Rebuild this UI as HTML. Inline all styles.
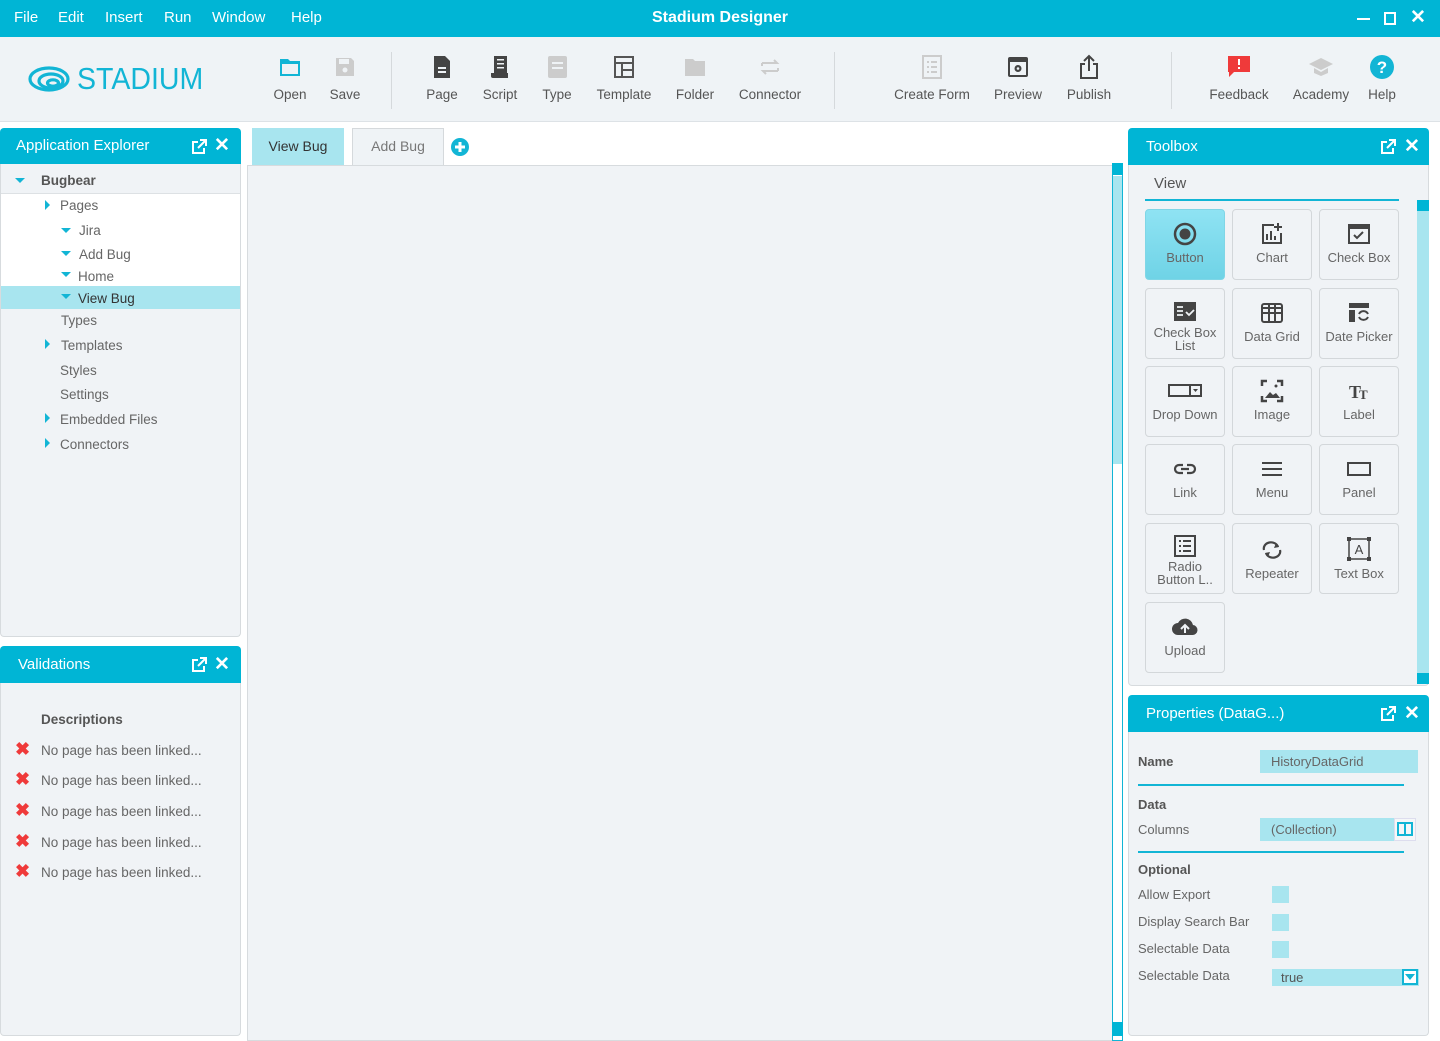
<!DOCTYPE html>
<html><head><meta charset="utf-8"><style>
*{box-sizing:border-box;margin:0;padding:0}
body{width:1440px;height:1041px;overflow:hidden;background:#fff;font-family:"Liberation Sans",sans-serif;color:#555;position:relative}
.abs{position:absolute}
.title{left:0;top:0;width:1440px;height:37px;background:#00b5d5;color:#fff}
.menu span{position:absolute;top:9px;font-size:15px}
.tb{left:0;top:37px;width:1440px;height:85px;background:#eff3f6;border-bottom:1px solid #dde2e6}
.tbi{position:absolute;top:0;text-align:center;font-size:13.5px;color:#555}
.tbi .ic{height:28px;margin-top:16px;display:flex;align-items:center;justify-content:center}
.tbi .lb{margin-top:6px}
.sep{position:absolute;top:15px;width:1px;height:57px;background:#d5d9dc}
.hdr{background:#00b5d5;color:#fff;font-size:15px;border-radius:4px 4px 0 0;padding-left:16px;line-height:36px}
.body{background:#f0f3f6;border:1px solid #d7dbde;border-top:none;border-radius:0 0 4px 4px}
.tree div{position:absolute;font-size:13.5px;color:#666}
.tri{position:absolute;width:0;height:0}
.td{border-left:5px solid transparent;border-right:5px solid transparent;border-top:5px solid #12b5d5}
.tr{border-top:5px solid transparent;border-bottom:5px solid transparent;border-left:5px solid #12b5d5}
.val div{position:absolute;font-size:13.5px;color:#666}
.tile{position:absolute;width:80px;height:71px;border:1px solid #d3d7da;border-radius:4px;text-align:center;font-size:13px;color:#666;line-height:13px}
.tile svg{display:block;margin:12px auto 5px}
.prop div{position:absolute;font-size:13px;color:#666}
</style></head><body>
<div class="abs title">
 <div class="menu"><span style="left:14px">File</span><span style="left:58px">Edit</span><span style="left:105px">Insert</span><span style="left:164px">Run</span><span style="left:212px">Window</span><span style="left:291px">Help</span></div>
 <div class="abs" style="left:0;width:1440px;top:9px;text-align:center;font-weight:bold;font-size:16px">Stadium Designer</div>
 <div class="abs" style="left:1357px;top:18px;width:13px;height:2px;background:#fff"></div>
 <div class="abs" style="left:1384px;top:12px;width:12px;height:13px;border:2px solid #fff"></div>
 <div class="abs" style="left:1410px;top:6px;font-size:19px;font-weight:bold">✕</div>
</div>
<div class="abs tb">
 <svg class="abs" style="left:28px;top:28px" width="44" height="28" viewBox="0 0 44 28"><g fill="none" stroke="#12b5d5" stroke-width="3.2"><ellipse cx="21" cy="14" rx="19" ry="11"/><ellipse cx="23" cy="16" rx="12" ry="7"/><ellipse cx="25" cy="18" rx="5.5" ry="3.2"/></g></svg>
 <div class="abs" style="left:77px;top:24px;font-size:31px;color:#12b5d5;transform:scaleX(0.92);transform-origin:left">STADIUM</div>
 <div class="tbi" style="left:268px;width:44px"><div class="ic"><svg width="22" height="22" viewBox="0 0 22 22"><path d="M1 3h8l2 2h10v15H1z" fill="#12b5d5"/><rect x="3" y="8" width="16" height="10" fill="#eff3f6"/></svg></div><div class="lb">Open</div></div>
 <div class="tbi" style="left:325px;width:40px"><div class="ic"><svg width="22" height="22" viewBox="0 0 22 22"><path d="M2 2h15l3 3v15H2z" fill="#ccc"/><rect x="5" y="3" width="10" height="5" fill="#eff3f6"/><circle cx="11" cy="14" r="2.5" fill="#eff3f6"/></svg></div><div class="lb">Save</div></div>
 <div class="sep" style="left:391px"></div>
 <div class="tbi" style="left:422px;width:40px"><div class="ic"><svg width="22" height="24" viewBox="0 0 22 24"><path d="M3 1h11l5 5v17H3z" fill="#444"/><rect x="7" y="12" width="8" height="2" fill="#eff3f6"/><rect x="7" y="16" width="8" height="2" fill="#eff3f6"/></svg></div><div class="lb">Page</div></div>
 <div class="tbi" style="left:478px;width:44px"><div class="ic"><svg width="22" height="24" viewBox="0 0 22 24"><rect x="5" y="1" width="13" height="18" fill="#444"/><rect x="8" y="4" width="7" height="1.5" fill="#eff3f6"/><rect x="8" y="8" width="7" height="1.5" fill="#eff3f6"/><rect x="8" y="12" width="7" height="1.5" fill="#eff3f6"/><path d="M2 18h17v5H4a2 2 0 0 1-2-2z" fill="#444"/></svg></div><div class="lb">Script</div></div>
 <div class="tbi" style="left:537px;width:40px"><div class="ic"><svg width="22" height="24" viewBox="0 0 22 24"><rect x="2" y="1" width="19" height="22" rx="2" fill="#ccc"/><rect x="6" y="7" width="11" height="2" fill="#eff3f6"/><rect x="6" y="12" width="11" height="2" fill="#eff3f6"/></svg></div><div class="lb">Type</div></div>
 <div class="tbi" style="left:593px;width:62px"><div class="ic"><svg width="22" height="24" viewBox="0 0 22 24"><rect x="2" y="2" width="18" height="20" fill="none" stroke="#555" stroke-width="2"/><path d="M2 8h18M9 8v14M9 15h11" stroke="#555" stroke-width="2"/></svg></div><div class="lb">Template</div></div>
 <div class="tbi" style="left:673px;width:44px"><div class="ic"><svg width="22" height="22" viewBox="0 0 22 22"><path d="M1 3h8l2 2h10v15H1z" fill="#ccc"/></svg></div><div class="lb">Folder</div></div>
 <div class="tbi" style="left:736px;width:68px"><div class="ic"><svg width="22" height="24" viewBox="0 0 22 24"><path d="M3 8h15l-3-3M19 16H4l3 3M3 8v3M19 16v-3" fill="none" stroke="#ccc" stroke-width="2"/></svg></div><div class="lb">Connector</div></div>
 <div class="sep" style="left:834px"></div>
 <div class="tbi" style="left:892px;width:80px"><div class="ic"><svg width="22" height="24" viewBox="0 0 22 24"><rect x="2" y="1" width="18" height="22" fill="none" stroke="#ccc" stroke-width="2"/><path d="M6 7h2M10 7h6M6 12h2M10 12h6M6 17h2M10 17h6" stroke="#ccc" stroke-width="2"/></svg></div><div class="lb">Create Form</div></div>
 <div class="tbi" style="left:992px;width:52px"><div class="ic"><svg width="22" height="22" viewBox="0 0 22 22"><rect x="1" y="1" width="20" height="20" rx="2" fill="#444"/><rect x="3" y="6" width="16" height="13" fill="#eff3f6"/><circle cx="11" cy="12.5" r="3.5" fill="#444"/><circle cx="11" cy="12.5" r="1.3" fill="#eff3f6"/></svg></div><div class="lb">Preview</div></div>
 <div class="tbi" style="left:1064px;width:50px"><div class="ic"><svg width="22" height="26" viewBox="0 0 22 26"><path d="M7 10H3v14h16V10h-4M11 17V2M6 7l5-5 5 5" fill="none" stroke="#444" stroke-width="2"/></svg></div><div class="lb">Publish</div></div>
 <div class="sep" style="left:1171px"></div>
 <div class="tbi" style="left:1206px;width:66px"><div class="ic"><svg width="24" height="24" viewBox="0 0 24 24"><path d="M1 1h22v16H7l-5 5v-5H1z" fill="#ef3a3a"/><rect x="11" y="4" width="2" height="6" fill="#fff"/><rect x="11" y="12" width="2" height="2" fill="#fff"/></svg></div><div class="lb">Feedback</div></div>
 <div class="tbi" style="left:1290px;width:62px"><div class="ic"><svg width="26" height="22" viewBox="0 0 26 22"><path d="M13 2l12 6-12 6L1 8z" fill="#ccc"/><path d="M6 12v5l7 3 7-3v-5l-7 4z" fill="#ccc"/></svg></div><div class="lb">Academy</div></div>
 <div class="tbi" style="left:1362px;width:40px"><div class="ic"><svg width="24" height="24" viewBox="0 0 24 24"><circle cx="12" cy="12" r="12" fill="#12b5d5"/><text x="12" y="18" text-anchor="middle" font-family="Liberation Sans" font-weight="bold" font-size="17" fill="#fff">?</text></svg></div><div class="lb">Help</div></div>
</div>

<div class="abs hdr" style="left:0;top:128px;width:241px;height:36px">Application Explorer</div>
<svg class="abs" style="left:191px;top:139px" width="16" height="16" viewBox="0 0 16 16"><path d="M7 3H2v11h11V9M9 1h6v6M15 1L7 9" fill="none" stroke="#fff" stroke-width="2"/></svg>
<div class="abs" style="left:214px;top:134px;color:#fff;font-weight:bold;font-size:19px">✕</div>
<div class="abs body" style="left:0;top:164px;width:241px;height:473px"></div>
<div class="abs" style="left:1px;top:193px;width:239px;height:116px;background:#fff;border-top:1px solid #dde1e4"></div>
<div class="abs" style="left:1px;top:286px;width:239px;height:23px;background:#a8e5ef"></div>
<div class="tree">
 <div class="tri td" style="left:15px;top:178px"></div><div style="left:41px;top:173px;font-weight:bold;color:#555">Bugbear</div>
 <div class="tri tr" style="left:45px;top:200px"></div><div style="left:60px;top:198px">Pages</div>
 <div class="tri td" style="left:61px;top:228px"></div><div style="left:79px;top:223px">Jira</div>
 <div class="tri td" style="left:61px;top:251px"></div><div style="left:79px;top:247px">Add Bug</div>
 <div class="tri td" style="left:61px;top:272px"></div><div style="left:78px;top:269px">Home</div>
 <div class="tri td" style="left:61px;top:294px"></div><div style="left:78px;top:291px;color:#333">View Bug</div>
 <div style="left:61px;top:313px">Types</div>
 <div class="tri tr" style="left:45px;top:339px"></div><div style="left:61px;top:338px">Templates</div>
 <div style="left:60px;top:363px">Styles</div>
 <div style="left:60px;top:387px">Settings</div>
 <div class="tri tr" style="left:45px;top:413px"></div><div style="left:60px;top:412px">Embedded Files</div>
 <div class="tri tr" style="left:45px;top:438px"></div><div style="left:60px;top:437px">Connectors</div>
</div>

<div class="abs hdr" style="left:0;top:646px;width:241px;height:37px;padding-left:18px;line-height:38px">Validations</div>
<svg class="abs" style="left:191px;top:657px" width="16" height="16" viewBox="0 0 16 16"><path d="M7 3H2v11h11V9M9 1h6v6M15 1L7 9" fill="none" stroke="#fff" stroke-width="2"/></svg>
<div class="abs" style="left:214px;top:653px;color:#fff;font-weight:bold;font-size:19px">✕</div>
<div class="abs body" style="left:0;top:683px;width:241px;height:353px"></div>
<div class="val">
 <div style="left:41px;top:712px;font-weight:bold;color:#555">Descriptions</div>
 <div style="left:15px;top:739px;color:#ef3a3a;font-weight:bold;font-size:18px">✖</div><div style="left:41px;top:743px">No page has been linked...</div>
 <div style="left:15px;top:769px;color:#ef3a3a;font-weight:bold;font-size:18px">✖</div><div style="left:41px;top:773px">No page has been linked...</div>
 <div style="left:15px;top:800px;color:#ef3a3a;font-weight:bold;font-size:18px">✖</div><div style="left:41px;top:804px">No page has been linked...</div>
 <div style="left:15px;top:831px;color:#ef3a3a;font-weight:bold;font-size:18px">✖</div><div style="left:41px;top:835px">No page has been linked...</div>
 <div style="left:15px;top:861px;color:#ef3a3a;font-weight:bold;font-size:18px">✖</div><div style="left:41px;top:865px">No page has been linked...</div>
</div>

<div class="abs" style="left:252px;top:128px;width:92px;height:37px;background:#a8e5ef;text-align:center;line-height:36px;font-size:14px;color:#333">View Bug</div>
<div class="abs" style="left:352px;top:128px;width:92px;height:37px;background:#eff3f6;border:1px solid #d5d9dc;border-bottom:none;text-align:center;line-height:35px;font-size:14px;color:#777">Add Bug</div>
<svg class="abs" style="left:451px;top:138px" width="18" height="18" viewBox="0 0 18 18"><circle cx="9" cy="9" r="9" fill="#12b5d5"/><path d="M9 4v10M4 9h10" stroke="#fff" stroke-width="3"/></svg>
<div class="abs" style="left:247px;top:165px;width:866px;height:876px;background:#f0f3f6;border:1px solid #d7dbde"></div>
<div class="abs" style="left:1112px;top:163px;width:11px;height:878px;background:#fff;border:1px solid #12b5d5"></div>
<div class="abs" style="left:1112px;top:163px;width:11px;height:12px;background:#00b5d5"></div>
<div class="abs" style="left:1113px;top:176px;width:9px;height:288px;background:#a8e5ef"></div>
<div class="abs" style="left:1112px;top:1022px;width:11px;height:14px;background:#00b5d5"></div>

<div class="abs hdr" style="left:1128px;top:128px;width:301px;height:37px;padding-left:18px;line-height:38px">Toolbox</div>
<svg class="abs" style="left:1380px;top:139px" width="16" height="16" viewBox="0 0 16 16"><path d="M7 3H2v11h11V9M9 1h6v6M15 1L7 9" fill="none" stroke="#fff" stroke-width="2"/></svg>
<div class="abs" style="left:1404px;top:135px;color:#fff;font-weight:bold;font-size:19px">✕</div>
<div class="abs body" style="left:1128px;top:165px;width:301px;height:521px"></div>
<div class="abs" style="left:1154px;top:175px;font-size:15px;color:#555">View</div>
<div class="abs" style="left:1145px;top:199px;width:254px;height:2px;background:#12b5d5"></div>
<div class="abs" style="left:1417px;top:200px;width:12px;height:484px;background:#a8e5ef"></div>
<div class="abs" style="left:1417px;top:200px;width:12px;height:11px;background:#00b5d5"></div>
<div class="abs" style="left:1417px;top:673px;width:12px;height:11px;background:#00b5d5"></div>

<div class="tile" style="left:1145px;top:209px;background:linear-gradient(#8fe3f3,#6fd3e6);border-color:#7fd6e6"><svg width="24" height="24" viewBox="0 0 24 24"><circle cx="12" cy="12" r="10" fill="none" stroke="#444" stroke-width="2.5"/><circle cx="12" cy="12" r="5.5" fill="#444"/></svg>Button</div>
<div class="tile" style="left:1232px;top:209px"><svg width="24" height="24" viewBox="0 0 24 24"><path d="M14 3H3v18h18V11" fill="none" stroke="#444" stroke-width="2"/><path d="M7 12v6M11 9v9M15 14v4M18 1v8M14 5h8" stroke="#444" stroke-width="2"/></svg>Chart</div>
<div class="tile" style="left:1319px;top:209px"><svg width="24" height="24" viewBox="0 0 24 24"><rect x="2" y="3" width="20" height="18" fill="none" stroke="#444" stroke-width="2"/><rect x="2" y="3" width="20" height="4" fill="#444"/><path d="M7 13l3 3 6-6" fill="none" stroke="#444" stroke-width="2"/></svg>Check Box</div>
<div class="tile" style="left:1145px;top:288px"><svg width="24" height="22" viewBox="0 0 24 22" style="margin-bottom:3px"><rect x="1" y="1" width="22" height="19" fill="#444"/><path d="M4 6h6M4 10h6M4 14h6M13 11l3 3 5-5" fill="none" stroke="#f0f3f6" stroke-width="1.8"/></svg>Check Box<br>List</div>
<div class="tile" style="left:1232px;top:288px"><svg width="24" height="24" viewBox="0 0 24 24"><rect x="2" y="3" width="20" height="18" rx="2" fill="none" stroke="#444" stroke-width="2"/><path d="M2 12h20M9 3v18M15 3v18M2 7h20" stroke="#444" stroke-width="2"/></svg>Data Grid</div>
<div class="tile" style="left:1319px;top:288px"><svg width="24" height="24" viewBox="0 0 24 24"><rect x="2" y="2" width="20" height="5" fill="#444"/><rect x="2" y="9" width="6" height="12" fill="#444"/><path d="M12 13a5 5 0 0 1 9 0M21 16a5 5 0 0 1-9 0" fill="none" stroke="#444" stroke-width="2"/></svg>Date Picker</div>
<div class="tile" style="left:1145px;top:366px"><svg width="34" height="24" viewBox="0 0 34 24"><rect x="1" y="6" width="32" height="11" fill="none" stroke="#444" stroke-width="2"/><path d="M22 6v11" stroke="#444" stroke-width="2"/><path d="M25 10h5l-2.5 3z" fill="#444"/></svg>Drop Down</div>
<div class="tile" style="left:1232px;top:366px"><svg width="24" height="24" viewBox="0 0 24 24"><path d="M2 7V2h5M17 2h5v5M22 17v5h-5M7 22H2v-5" fill="none" stroke="#444" stroke-width="2.5"/><path d="M5 19l5-6 3 3 3-2 4 5z" fill="#444"/><circle cx="16" cy="7" r="1.5" fill="#444"/></svg>Image</div>
<div class="tile" style="left:1319px;top:366px"><svg width="24" height="24" viewBox="0 0 24 24"><text x="2" y="19" font-family="Liberation Serif" font-weight="bold" font-size="18" fill="#444">T</text><text x="12" y="20" font-family="Liberation Serif" font-weight="bold" font-size="13" fill="#444">T</text></svg>Label</div>
<div class="tile" style="left:1145px;top:444px"><svg width="24" height="24" viewBox="0 0 24 24"><path d="M10 8H6a4 4 0 0 0 0 8h4M14 8h4a4 4 0 0 1 0 8h-4M8 12h8" fill="none" stroke="#444" stroke-width="2.2"/></svg>Link</div>
<div class="tile" style="left:1232px;top:444px"><svg width="24" height="24" viewBox="0 0 24 24"><path d="M2 6h20M2 12h20M2 18h20" stroke="#444" stroke-width="2"/></svg>Menu</div>
<div class="tile" style="left:1319px;top:444px"><svg width="26" height="24" viewBox="0 0 26 24"><rect x="2" y="6" width="22" height="12" fill="none" stroke="#444" stroke-width="2"/></svg>Panel</div>
<div class="tile" style="left:1145px;top:523px"><svg width="24" height="24" viewBox="0 0 24 24" style="margin-top:10px;margin-bottom:2px"><rect x="2" y="2" width="20" height="20" fill="none" stroke="#444" stroke-width="2"/><path d="M6 7h2M10 7h8M6 12h2M10 12h8M6 17h2M10 17h8" stroke="#444" stroke-width="2"/></svg>Radio<br>Button L..</div>
<div class="tile" style="left:1232px;top:523px"><svg width="24" height="24" viewBox="0 0 24 24" style="margin-top:14px"><path d="M4 12a7 6 0 0 1 14-3M20 12a7 6 0 0 1-14 3" fill="none" stroke="#444" stroke-width="2.2"/><path d="M16 5l3 4-5 1zM8 19l-3-4 5-1z" fill="#444"/></svg>Repeater</div>
<div class="tile" style="left:1319px;top:523px"><svg width="26" height="26" viewBox="0 0 26 26"><rect x="3" y="3" width="20" height="20" fill="none" stroke="#444" stroke-width="1.5"/><rect x="1" y="1" width="4" height="4" fill="#444"/><rect x="21" y="1" width="4" height="4" fill="#444"/><rect x="1" y="21" width="4" height="4" fill="#444"/><rect x="21" y="21" width="4" height="4" fill="#444"/><text x="13" y="18" text-anchor="middle" font-family="Liberation Sans" font-size="13" fill="#444">A</text></svg>Text Box</div>
<div class="tile" style="left:1145px;top:602px"><svg width="28" height="24" viewBox="0 0 28 24"><path d="M7 20a6 6 0 0 1 0-12 8 8 0 0 1 15 2 5 5 0 0 1-1 10z" fill="#444"/><path d="M14 18v-7M10 14l4-4 4 4" fill="none" stroke="#f0f3f6" stroke-width="2"/></svg>Upload</div>

<div class="abs hdr" style="left:1128px;top:695px;width:301px;height:37px;padding-left:18px;line-height:37px">Properties (DataG...)</div>
<svg class="abs" style="left:1380px;top:706px" width="16" height="16" viewBox="0 0 16 16"><path d="M7 3H2v11h11V9M9 1h6v6M15 1L7 9" fill="none" stroke="#fff" stroke-width="2"/></svg>
<div class="abs" style="left:1404px;top:702px;color:#fff;font-weight:bold;font-size:19px">✕</div>
<div class="abs body" style="left:1128px;top:732px;width:301px;height:304px"></div>
<div class="prop">
 <div style="left:1138px;top:754px;font-weight:bold;color:#555">Name</div>
 <div style="left:1260px;top:750px;width:158px;height:23px;background:#a8e5ef;padding:4px 0 0 11px;color:#666">HistoryDataGrid</div>
 <div style="left:1138px;top:784px;width:266px;height:2px;background:#12b5d5"></div>
 <div style="left:1138px;top:797px;font-weight:bold;color:#555">Data</div>
 <div style="left:1138px;top:822px">Columns</div>
 <div style="left:1260px;top:818px;width:134px;height:23px;background:#a8e5ef;padding:4px 0 0 11px;color:#666">(Collection)</div>
 <div style="left:1394px;top:818px;width:22px;height:23px;background:#f5f7f8;border:1px solid #dde"></div>
 <div style="left:1397px;top:822px;width:16px;height:14px;border:2px solid #12b5d5"></div>
 <div style="left:1404px;top:822px;width:2px;height:14px;background:#12b5d5"></div>
 <div style="left:1138px;top:851px;width:266px;height:2px;background:#12b5d5"></div>
 <div style="left:1138px;top:862px;font-weight:bold;color:#555">Optional</div>
 <div style="left:1138px;top:887px">Allow Export</div><div style="left:1272px;top:886px;width:17px;height:17px;background:#a8e5ef"></div>
 <div style="left:1138px;top:914px">Display Search Bar</div><div style="left:1272px;top:914px;width:17px;height:17px;background:#a8e5ef"></div>
 <div style="left:1138px;top:941px">Selectable Data</div><div style="left:1272px;top:941px;width:17px;height:17px;background:#a8e5ef"></div>
 <div style="left:1138px;top:968px">Selectable Data</div>
 <div style="left:1272px;top:969px;width:147px;height:17px;background:#a8e5ef;padding:1px 0 0 9px;color:#555">true</div>
 <div style="left:1402px;top:969px;width:16px;height:16px;background:#fff;border:2px solid #12b5d5"></div>
 <div style="left:1405px;top:974px;width:0;height:0;border-left:5px solid transparent;border-right:5px solid transparent;border-top:6px solid #12b5d5"></div>
</div>
</body></html>
